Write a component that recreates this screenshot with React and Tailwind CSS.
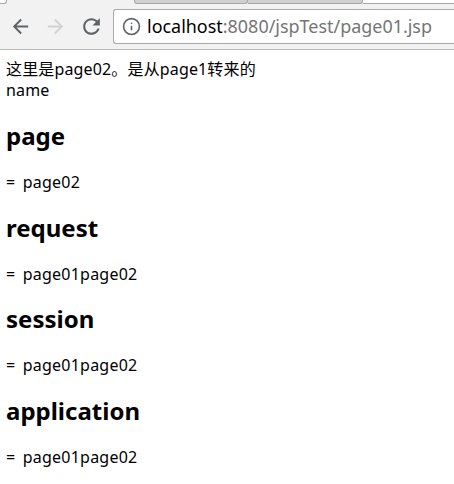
import { Info } from 'lucide-react'

function Arrow({ flip, className }) {
  return (
    <svg viewBox="0 0 24 24" width="23" height="23" fill="currentColor" className={flip ? `${className} -scale-x-100` : className}>
      <path d="M20 11H7.83l5.59-5.59L12 4l-8 8 8 8 1.41-1.41L7.83 13H20v-2z" />
    </svg>
  )
}

function Section({ title, value }) {
  return (
    <>
      <h2 className="mt-[18.4px] mb-[20px] text-[24px] leading-[32px] font-bold text-black">{title}</h2>
      <p className="mt-[20px] mb-[18.4px] text-[16px] leading-[21px] tracking-[0.22px] [word-spacing:3px]">= {value}</p>
    </>
  )
}

export default function App() {
  return (
    <div className="w-[454px] h-[484px] overflow-hidden bg-white text-black font-['Noto_Sans','Noto_Sans_CJK_SC',sans-serif]">
      <div className="h-[50px] bg-[#f2f2f2] border-b border-[#b9b9b9]">
        <div className="h-[4px] flex">
          <div className="w-[7px] bg-white border-r border-b border-[#a8a8a8] rounded-br-[3px]" />
          <div className="w-[127px]" />
          <div className="w-[114px] bg-[#d0d0d0] border-x border-b border-[#a8a8a8] rounded-b-[3px]" />
          <div className="w-[115px] bg-[#d0d0d0] border-r border-b border-[#a8a8a8] rounded-br-[3px]" />
          <div className="flex-1 bg-white border-b border-[#a8a8a8]" />
        </div>
        <div className="flex items-center pt-[5px] pl-[9px]">
          <Arrow className="text-[#5f6368]" />
          <Arrow flip className="ml-[12px] text-[#d2d2d2]" />
          <svg viewBox="0 0 24 24" width="25" height="25" fill="currentColor" className="ml-[12px] text-[#5f6368]">
            <path d="M17.65 6.35C16.2 4.9 14.21 4 12 4c-4.42 0-7.99 3.58-7.99 8s3.57 8 7.99 8c3.73 0 6.84-2.55 7.73-6h-2.08c-.82 2.33-3.04 4-5.65 4-3.31 0-6-2.69-6-6s2.69-6 6-6c1.66 0 3.14.69 4.22 1.78L13 11h7V4l-2.35 2.35z" />
          </svg>
          <div className="flex-1 ml-[9px] h-[35px] flex items-center pl-[8px] bg-white border border-r-0 border-[#aaaaaa] rounded-l-[3px]">
            <Info size={19} strokeWidth={2} className="text-[#5f6368]" />
            <span className="ml-[6px] text-[17.95px] leading-none text-[#757575]"><span className="text-black">localhost</span>:8080/jspTest/page01.jsp</span>
          </div>
        </div>
      </div>
      <div className="px-[6px] pt-[9px]">
        <div className="pb-[1px] text-[16px] leading-[21px] tracking-[0.15px]">这里是page02。是从page1转来的<br />name</div>
        <Section title="page" value="page02" />
        <Section title="request" value="page01page02" />
        <Section title="session" value="page01page02" />
        <Section title="application" value="page01page02" />
      </div>
    </div>
  )
}
